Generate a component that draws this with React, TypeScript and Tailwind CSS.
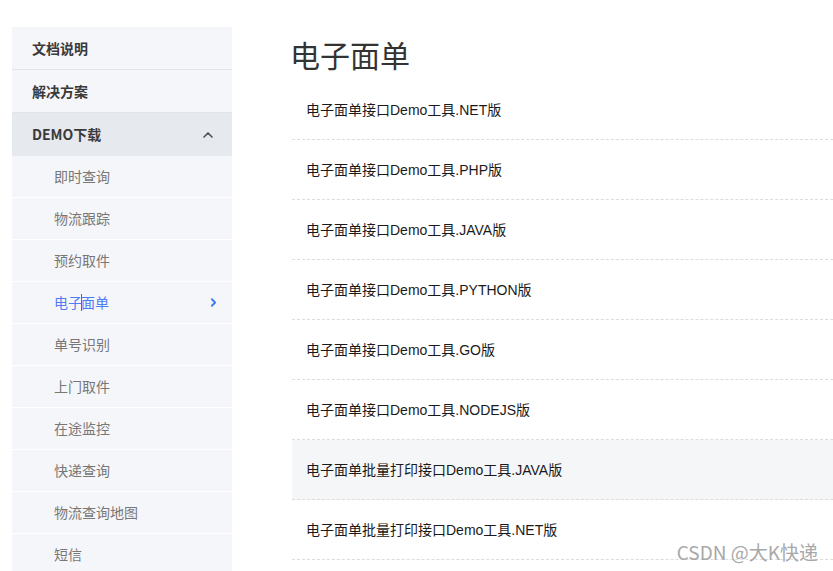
import { ChevronRight, ChevronUp } from "lucide-react"

const font = { fontFamily: '"Noto Sans CJK SC", "Noto Sans", sans-serif' }

const subItems = [
  "即时查询",
  "物流跟踪",
  "预约取件",
  "电子面单",
  "单号识别",
  "上门取件",
  "在途监控",
  "快递查询",
  "物流查询地图",
  "短信",
]

const rows = [
  "电子面单接口Demo工具.NET版",
  "电子面单接口Demo工具.PHP版",
  "电子面单接口Demo工具.JAVA版",
  "电子面单接口Demo工具.PYTHON版",
  "电子面单接口Demo工具.GO版",
  "电子面单接口Demo工具.NODEJS版",
  "电子面单批量打印接口Demo工具.JAVA版",
  "电子面单批量打印接口Demo工具.NET版",
]

export default function App() {
  return (
    <div
      className="relative flex h-[571px] w-[833px] overflow-hidden bg-white pl-3 pt-[27px]"
      style={{ fontFamily: '"Liberation Sans", "Noto Sans CJK SC", sans-serif' }}
    >
      {/* 左侧菜单 */}
      <div className="flex w-[220px] shrink-0 flex-col bg-[#f5f6fa]" style={font}>
        <div className="flex h-[43px] shrink-0 items-center border-b border-[#e2e4e9] pl-5 text-[14px] font-bold text-[#3a3a3a]">
          文档说明
        </div>
        <div className="flex h-[43px] shrink-0 items-center border-b border-[#e2e4e9] pl-5 text-[14px] font-bold text-[#3a3a3a]">
          解决方案
        </div>
        <div className="flex h-[43px] shrink-0 items-center justify-between bg-[#e6e9ee] pl-5 pr-4 text-[14px] font-bold text-[#3a3a3a]">
          <span>DEMO下载</span>
          <ChevronUp size={16} strokeWidth={2.6} className="text-[#555]" />
        </div>
        {subItems.map((name) => {
          const active = name === "电子面单"
          return (
            <div
              key={name}
              className={`flex h-[42px] shrink-0 items-center justify-between border-b border-white pl-[42px] pr-3 text-[14px] ${
                active ? "text-[#4f7cf5]" : "text-[#777]"
              }`}
            >
              {active ? (
                <span className="flex items-center">
                  电子
                  <span className="mx-[-1px] inline-block h-[17px] w-px bg-[#2f6bf0]" />
                  面单
                </span>
              ) : (
                <span>{name}</span>
              )}
              {active && <ChevronRight size={13} strokeWidth={3.4} className="text-[#3d7af6]" />}
            </div>
          )
        })}
      </div>

      {/* 右侧内容 */}
      <div className="ml-[60px] flex flex-1 flex-col">
        <h1 className="-ml-[2px] flex h-[53px] shrink-0 items-center text-[30px] leading-none text-[#333]" style={font}>
          电子面单
        </h1>
        {rows.map((r, i) => (
          <div
            key={i}
            className={`flex h-[60px] shrink-0 items-center border-b border-dashed border-[#dcdcdc] pl-[14px] pt-[1px] text-[14px] text-[#1a1a1a] ${
              i === 6 ? "bg-[#f5f6f8]" : ""
            }`}
          >
            {r}
          </div>
        ))}
      </div>

      <div className="absolute right-[15px] top-[538px] text-[19px] text-[#a8a8a8]" style={font}>
        CSDN @大K快递
      </div>
    </div>
  )
}
